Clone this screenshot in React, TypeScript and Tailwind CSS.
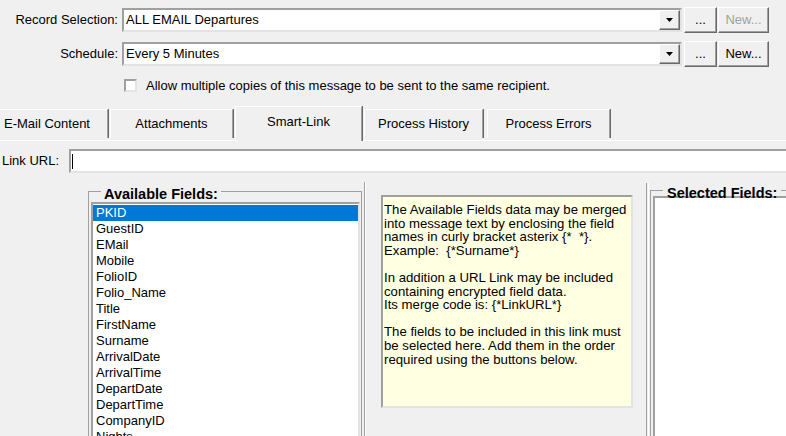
import React from 'react'

const FIELDS = [
  'PKID', 'GuestID', 'EMail', 'Mobile', 'FolioID', 'Folio_Name', 'Title', 'FirstName',
  'Surname', 'ArrivalDate', 'ArrivalTime', 'DepartDate', 'DepartTime', 'CompanyID', 'Nights',
]

const sunken = 'border-2 border-t-[#a0a0a0] border-l-[#a0a0a0] border-r-[#e3e3e3] border-b-[#e3e3e3]'
const raised = 'border border-t-white border-l-white border-r-[#696969] border-b-[#696969] shadow-[inset_-1px_-1px_0_#a0a0a0]'

function Arrow() {
  return (
    <svg width="7" height="4" viewBox="0 0 7 4">
      <polygon points="0,0 7,0 3.5,4" fill="#000" />
    </svg>
  )
}

function Combo({ value }: { value: string }) {
  return (
    <div className={`ml-[4px] w-[560px] h-[24px] shrink-0 bg-white flex items-stretch ${sunken}`}>
      <span className="flex-1 pl-[2px] leading-[20px] whitespace-nowrap">{value}</span>
      <div className={`w-[21px] bg-[#f0f0f0] flex items-center justify-center ${raised}`}>
        <Arrow />
      </div>
    </div>
  )
}

function Btn({ label, disabled, w }: { label: string; disabled?: boolean; w: string }) {
  return (
    <div className={`h-[26px] ${w} bg-[#f0f0f0] flex items-center justify-center ${raised} ${disabled ? 'text-[#a0a0a0]' : 'text-black'}`}>
      {label}
    </div>
  )
}

function Row({ label, value, newDisabled, className }: { label: string; value: string; newDisabled?: boolean; className: string }) {
  return (
    <div className={`flex items-center h-[26px] ${className}`}>
      <div className="w-[118px] shrink-0 text-right whitespace-nowrap">{label}</div>
      <Combo value={value} />
      <div className="ml-[2px] shrink-0"><Btn label="..." w="w-[33px]" /></div>
      <div className="ml-[1px] shrink-0"><Btn label="New..." w="w-[51px]" disabled={newDisabled} /></div>
    </div>
  )
}

const tabBase = 'shrink-0 flex items-center justify-center whitespace-nowrap bg-[#f0f0f0] border-t border-l border-white border-r border-r-[#a0a0a0] shadow-[1px_0_0_#696969]'

export default function App() {
  return (
    <div className="w-[786px] h-[436px] overflow-hidden bg-[#f0f0f0] text-black text-[13px] font-['Liberation_Sans',Arial,sans-serif]">
      <Row label="Record Selection:" value="ALL EMAIL Departures" newDisabled className="mt-[7px]" />
      <Row label="Schedule:" value="Every 5 Minutes" className="mt-[8px]" />

      {/* Checkbox */}
      <div className="flex items-center h-[13px] mt-[12px]">
        <div className={`ml-[124px] w-[13px] h-[13px] shrink-0 bg-white ${sunken}`} />
        <span className="ml-[9px] leading-[13px] whitespace-nowrap">Allow multiple copies of this message to be sent to the same recipient.</span>
      </div>

      {/* Tabs */}
      <div className="mt-[14px] h-[35px] flex items-end border-b border-white">
        <div className={`${tabBase} -ml-[14px] w-[122px] h-[29px] mb-[2px]`}>E-Mail Content</div>
        <div className={`${tabBase} ml-[2px] w-[123px] h-[29px] mb-[2px]`}>Attachments</div>
        <div className={`${tabBase} ml-[2px] w-[127px] h-[35px] -mb-[1px] pb-[4px]`}>Smart-Link</div>
        <div className={`${tabBase} ml-[2px] w-[119px] h-[29px] mb-[2px]`}>Process History</div>
        <div className={`${tabBase} ml-[4px] w-[123px] h-[29px] mb-[2px]`}>Process Errors</div>
      </div>

      {/* Link URL */}
      <div className="mt-[8px] flex items-center h-[24px]">
        <div className="w-[69px] shrink-0 pl-[2px] whitespace-nowrap">Link URL:</div>
        <div className={`w-[740px] shrink-0 h-[24px] bg-white flex items-center ${sunken}`}>
          <div className="ml-[1px] w-[1px] h-[15px] bg-black" />
        </div>
      </div>

      {/* Field panels */}
      <div className="mt-[9px] flex items-start">
        <fieldset className="shrink-0 ml-[88px] mt-[2px] w-[274px] h-[300px] border border-[#a0a0a0] px-[1px] pt-0">
          <legend className="ml-[11px] px-[3px] font-bold text-[14.5px] leading-[14px] whitespace-nowrap">
            <span className="relative top-[3px]">Available Fields:</span>
          </legend>
          <div className={`mt-[4px] ml-[1px] w-[269px] h-[300px] bg-white pt-[1px] ${sunken}`}>
            {FIELDS.map((f, i) => (
              <div
                key={f}
                className={`h-[16px] leading-[16px] pl-[3px] whitespace-nowrap ${i === 0 ? 'bg-[#0078d7] text-white' : ''}`}
              >
                {f}
              </div>
            ))}
          </div>
        </fieldset>

        <div className="shrink-0 ml-[2px] w-[2px] h-[260px] border-l border-l-[#a0a0a0] border-r border-r-white" />

        <div className={`shrink-0 ml-[15px] mt-[13px] w-[252px] h-[213px] bg-[#ffffe1] pl-[1px] pt-[6px] text-[13.2px] leading-[13.6px] whitespace-pre ${sunken} border-t-[#808080] border-l-[#808080]`}>
          {'The Available Fields data may be merged\n' +
            'into message text by enclosing the field\n' +
            'names in curly bracket asterix {*  *}.\n' +
            'Example:  {*Surname*}\n' +
            '\n' +
            'In addition a URL Link may be included\n' +
            'containing encrypted field data.\n' +
            'Its merge code is: {*LinkURL*}\n' +
            '\n' +
            'The fields to be included in this link must\n' +
            'be selected here. Add them in the order\n' +
            'required using the buttons below.'}
        </div>

        <div className="shrink-0 ml-[13px] mt-[1px] w-[3px] h-[260px] border-l border-l-[#a0a0a0] border-r border-r-white" />

        <fieldset className="shrink-0 ml-[1px] mt-[1px] w-[200px] h-[300px] border border-[#a0a0a0] px-[1px] pt-0">
          <legend className="ml-[11px] px-[4px] font-bold text-[14.5px] leading-[14px] whitespace-nowrap">
            <span className="relative top-[3px]">Selected Fields:</span>
          </legend>
          <div className={`-mt-[1px] ml-[1px] w-[196px] h-[300px] bg-white border-t-[#808080] border-l-[#808080] ${sunken}`} />
        </fieldset>
      </div>
    </div>
  )
}
